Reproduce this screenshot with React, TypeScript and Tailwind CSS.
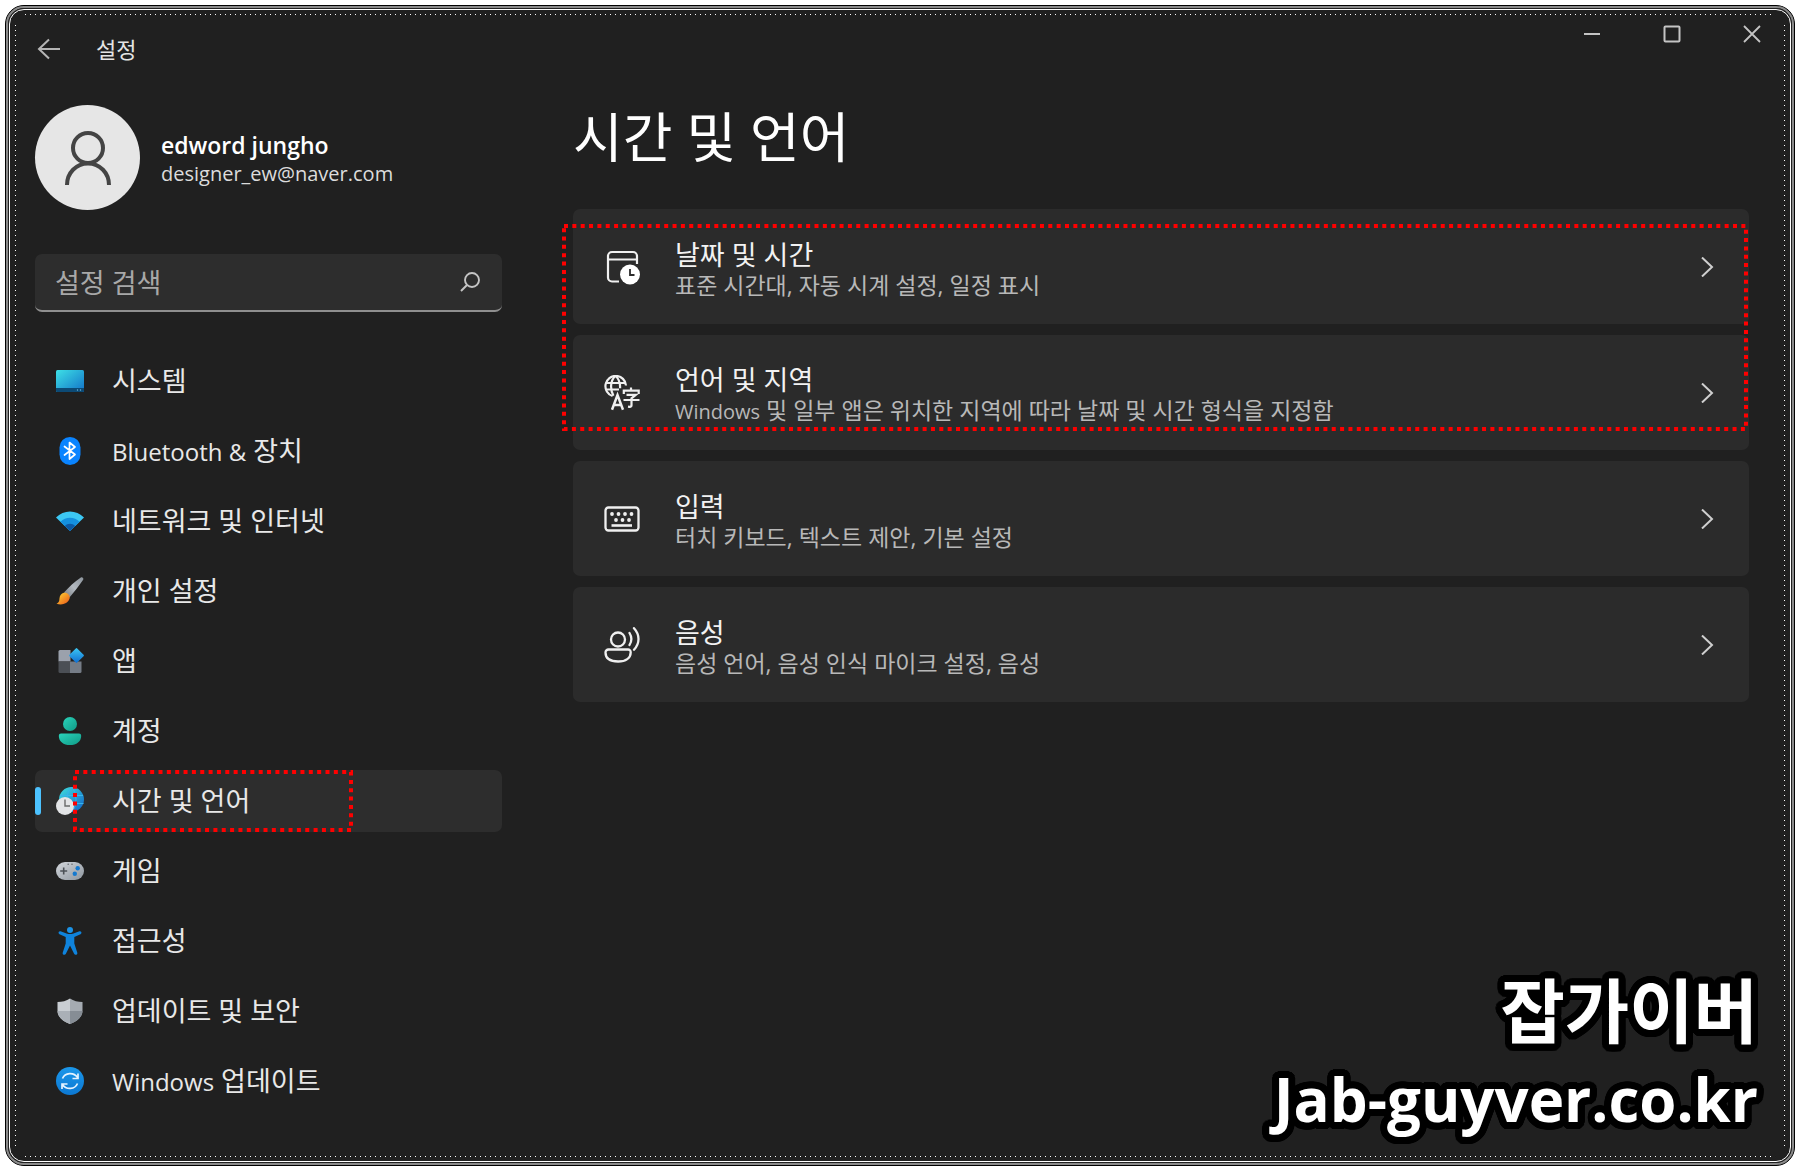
import React from 'react'

type NavItem = { label: React.ReactNode; icon: React.ReactNode; active?: boolean }
type CardItem = { title: string; desc: React.ReactNode; icon: React.ReactNode }

const SystemIcon = () => (
  <svg viewBox="0 0 28 28" className="h-7 w-7">
    <defs>
      <linearGradient id="sys" x1="0" y1="0" x2="1" y2="1">
        <stop offset="0" stopColor="#3de0e6" />
        <stop offset="1" stopColor="#1272c8" />
      </linearGradient>
    </defs>
    <rect x="0" y="3" width="28" height="22" rx="1.500" fill="url(#sys)" />
    <path d="M0 21h28v2.500a1.500 1.500 0 0 1-1.500 1.500h-25A1.500 1.500 0 0 1 0 23.500z" fill="#0c4a75" />
    <circle cx="21.500" cy="23" r="0.700" fill="#6fb8dc" />
    <circle cx="24.500" cy="23" r="0.700" fill="#6fb8dc" />
  </svg>
)

const BluetoothIcon = () => (
  <svg viewBox="0 0 28 28" className="h-7 w-7">
    <rect x="3.500" y="0" width="21" height="28" rx="10.500" fill="#0a84ff" />
    <path d="M8.500 9.500l10.500 8-5.500 4.500V5.500l5.500 4.500-10.500 8" fill="none" stroke="#fff" strokeWidth="1.700" strokeLinejoin="round" strokeLinecap="round" />
  </svg>
)

const NetworkIcon = () => (
  <svg viewBox="0 0 28 28" className="h-7 w-7">
    <path d="M14 24L0 10.500C7.500 2.500 20.500 2.500 28 10.500z" fill="#3cc8f4" />
    <path d="M14 24L4.500 14.800c5-5.500 14-5.500 19 0z" fill="#1490df" />
    <path d="M14 24L8.800 19c2.800-3 7.600-3 10.400 0z" fill="#0c59a4" />
  </svg>
)

const BrushIcon = () => (
  <svg viewBox="0 0 28 28" className="h-7 w-7">
    <defs>
      <linearGradient id="brush" x1="0" y1="0" x2="1" y2="1">
        <stop offset="0.200" stopColor="#fbc02d" />
        <stop offset="1" stopColor="#e8541a" />
      </linearGradient>
      <linearGradient id="handle" x1="1" y1="0" x2="0" y2="1">
        <stop offset="0" stopColor="#8b939b" />
        <stop offset="0.500" stopColor="#b4bac1" />
        <stop offset="1" stopColor="#73797f" />
      </linearGradient>
    </defs>
    <path d="M24.500.800c1.600-1.400 3.700.600 2.500 2.300C23 9 18.500 14.800 13.500 20.500L8 15.500C13 10 18.500 5 24.500.800z" fill="url(#handle)" />
    <path d="M7.800 15.800c3.800-.700 7 2.800 5.600 6.300C11.700 27 5.500 28.600.500 26.700c3-1.300 2.700-3 3-5.400.300-2.800 1.700-5 4.300-5.500z" fill="url(#brush)" />
  </svg>
)

const AppsIcon = () => (
  <svg viewBox="0 0 28 28" className="h-7 w-7">
    <defs>
      <linearGradient id="apps" x1="0" y1="0" x2="1" y2="1">
        <stop offset="0" stopColor="#3cc8f4" />
        <stop offset="1" stopColor="#0f6cd0" />
      </linearGradient>
    </defs>
    <path d="M4 3h10.500v11.500H2.500V4.500A1.500 1.500 0 0 1 4 3z" fill="#9ba1ac" />
    <path d="M2.500 14.500h11.500V26H4a1.500 1.500 0 0 1-1.500-1.500z" fill="#4b4f55" />
    <path d="M14 14.500h11.500v10A1.500 1.500 0 0 1 24 26H14z" fill="#757c86" />
    <rect x="15" y="3" width="11" height="11" rx="1" transform="rotate(45 20.500 8.500)" fill="url(#apps)" />
  </svg>
)

const AccountIcon = () => (
  <svg viewBox="0 0 28 28" className="h-7 w-7">
    <defs>
      <linearGradient id="acc" x1="0" y1="0" x2="1" y2="1">
        <stop offset="0" stopColor="#2ad4bb" />
        <stop offset="1" stopColor="#109a86" />
      </linearGradient>
    </defs>
    <circle cx="14" cy="7" r="7" fill="url(#acc)" />
    <path d="M5 16.500h18a2.200 2.200 0 0 1 2.200 2.200C25.200 24.500 20.500 28 14 28S2.800 24.500 2.800 18.700A2.200 2.200 0 0 1 5 16.500z" fill="url(#acc)" />
  </svg>
)

const TimeIcon = () => (
  <svg viewBox="0 0 28 28" className="h-7 w-7">
    <defs>
      <linearGradient id="globe" x1="0" y1="0" x2="1" y2="1">
        <stop offset="0" stopColor="#3fe0de" />
        <stop offset="1" stopColor="#0f62c8" />
      </linearGradient>
    </defs>
    <circle cx="15.500" cy="12.500" r="12.500" fill="url(#globe)" />
    <path d="M4 8.500h23M5 16.500h22.500M15.500 0c-6 6-6 19 0 25M15.500 0c6 6 6 19 0 25" fill="none" stroke="#38b5ea" strokeWidth="1" />
    <circle cx="9" cy="19" r="9" fill="#e3e4e6" />
    <path d="M9 12.500V19h5" fill="none" stroke="#6b6b6b" strokeWidth="1.400" />
  </svg>
)

const GameIcon = () => (
  <svg viewBox="0 0 28 28" className="h-7 w-7">
    <defs>
      <linearGradient id="pad" x1="0" y1="0" x2="1" y2="1">
        <stop offset="0" stopColor="#d3d7dc" />
        <stop offset="1" stopColor="#8e969f" />
      </linearGradient>
    </defs>
    <rect x="0" y="5" width="28" height="18" rx="9" fill="url(#pad)" />
    <path d="M7.700 10.500v7M4.200 14h7" stroke="#4c5157" strokeWidth="1.600" />
    <circle cx="21.700" cy="11.300" r="2.200" fill="#1579cf" />
    <circle cx="18.800" cy="16.800" r="2.200" fill="#1579cf" />
    <circle cx="12.200" cy="7.200" r="0.800" fill="#666b71" />
    <circle cx="16" cy="7.200" r="0.800" fill="#666b71" />
  </svg>
)

const AccessIcon = () => (
  <svg viewBox="0 0 28 28" className="h-7 w-7">
    <circle cx="14" cy="3" r="3" fill="#1b93e6" />
    <path d="M4.500 4.300l6 2.200c2.300.800 4.700.800 7 0l6-2.200c2-.600 2.700 2.200 1 3L18.300 10v6.500l3 9.300c.500 2-2.400 2.900-3.200 1L14 18.500l-4.100 8.300c-.800 1.900-3.700 1-3.200-1l3-9.300V10L3.500 7.300c-1.700-.800-1-3.600 1-3z" fill="#0f83dc" />
  </svg>
)

const ShieldIcon = () => (
  <svg viewBox="0 0 28 28" className="h-7 w-7">
    <path d="M14 1.500C10.500 4 6 5 1.500 5v8.500C1.500 20 7 24.500 14 27z" fill="#c9ced3" />
    <path d="M14 1.500C17.500 4 22 5 26.500 5v8.500C26.500 20 21 24.500 14 27z" fill="#a5abb2" />
    <path d="M1.500 14H14v13C7 24.500 1.500 20 1.500 14z" fill="#aab0b7" />
    <path d="M26.500 14H14v13c7-2.500 12.500-7 12.500-13z" fill="#868d95" />
  </svg>
)

const UpdateIcon = () => (
  <svg viewBox="0 0 28 28" className="h-7 w-7">
    <defs>
      <linearGradient id="upd" x1="0" y1="0" x2="0" y2="1">
        <stop offset="0" stopColor="#1b97ea" />
        <stop offset="1" stopColor="#0c78d2" />
      </linearGradient>
    </defs>
    <circle cx="14" cy="14" r="14" fill="url(#upd)" />
    <path d="M6.500 11.500c2.500-6 11-6.800 15.200-1M22 6.500v5h-5.500M21.500 16.500c-2.500 6-11 6.800-15.200 1M6 22v-5h5.500" fill="none" stroke="#e4f3ff" strokeWidth="1.700" />
  </svg>
)

const DateIcon = () => (
  <svg viewBox="0 0 36 36" className="h-9 w-9" fill="none" stroke="#f0f0f0" strokeWidth="2.200">
    <path d="M33 15V7a4 4 0 0 0-4-4H8a4 4 0 0 0-4 4v21.500a4 4 0 0 0 4 4h7M4 10.500h29" />
    <circle cx="26" cy="25.500" r="10" fill="#fff" stroke="none" />
    <path d="M26 20v6h4.500" stroke="#2b2b2b" strokeWidth="1.800" />
  </svg>
)

const LanguageIcon = () => (
  <svg viewBox="0 0 36 36" className="h-9 w-9" fill="none" stroke="#f0f0f0" strokeWidth="2.200">
    <path d="M22 10.500A10.300 10.300 0 1 0 8.500 21" />
    <path d="M1.500 8h20M1.500 14.500h13.500M11.500.800c-5.500 5-5.500 14-2 20M11.500.800c3.800 3.500 4.800 7.500 4.600 12.500" />
    <path d="M8 34.800L13.500 20 19 34.800M10 30h7" strokeWidth="2.500" />
    <path d="M27 12.500v3M19.800 19v-3.300h14.900V19M22.500 19.800h9.300L27.500 23.300V30.500c0 1.200-1.500 1.500-3.500 1.200M19.500 25h16" strokeWidth="2.200" />
  </svg>
)

const KeyboardIcon = () => (
  <svg viewBox="0 0 36 36" className="h-9 w-9" fill="none" stroke="#f0f0f0" strokeWidth="2.300">
    <rect x="1.500" y="6.500" width="33" height="23" rx="3" />
    <path d="M7.500 24.500h20.500" strokeWidth="2.600" />
    <g fill="#f0f0f0" stroke="none">
      <circle cx="8" cy="13" r="1.900" />
      <circle cx="14.500" cy="13" r="1.900" />
      <circle cx="21" cy="13" r="1.900" />
      <circle cx="27.500" cy="13" r="1.900" />
      <circle cx="12" cy="19" r="1.900" />
      <circle cx="18.500" cy="19" r="1.900" />
      <circle cx="25" cy="19" r="1.900" />
    </g>
  </svg>
)

const SpeechIcon = () => (
  <svg viewBox="0 0 36 36" className="h-9 w-9" fill="none" stroke="#f0f0f0" strokeWidth="2.300">
    <circle cx="14" cy="12.500" r="7" />
    <path d="M4.500 22.500h19.500a2.700 2.700 0 0 1 2.700 2.700c0 6-5 9.300-12.600 9.300S1.500 31.500 1.500 25.500a3 3 0 0 1 3-3z" />
    <path d="M25.500 6c2.500 4 2.500 8 0 12M30 1.200c6 6.500 6 15 0 21.500" strokeLinecap="round" />
  </svg>
)

const navItems: NavItem[] = [
  { label: '시스템', icon: <SystemIcon /> },
  { label: <><span className="text-2xl">Bluetooth &amp;</span> 장치</>, icon: <BluetoothIcon /> },
  { label: '네트워크 및 인터넷', icon: <NetworkIcon /> },
  { label: '개인 설정', icon: <BrushIcon /> },
  { label: '앱', icon: <AppsIcon /> },
  { label: '계정', icon: <AccountIcon /> },
  { label: '시간 및 언어', icon: <TimeIcon />, active: true },
  { label: '게임', icon: <GameIcon /> },
  { label: '접근성', icon: <AccessIcon /> },
  { label: '업데이트 및 보안', icon: <ShieldIcon /> },
  { label: <><span className="text-2xl">Windows</span> 업데이트</>, icon: <UpdateIcon /> },
]

const cards: CardItem[] = [
  { title: '날짜 및 시간', desc: '표준 시간대, 자동 시계 설정, 일정 표시', icon: <DateIcon /> },
  { title: '언어 및 지역', desc: <><span className="text-xl">Windows</span> 및 일부 앱은 위치한 지역에 따라 날짜 및 시간 형식을 지정함</>, icon: <LanguageIcon /> },
  { title: '입력', desc: '터치 키보드, 텍스트 제안, 기본 설정', icon: <KeyboardIcon /> },
  { title: '음성', desc: '음성 언어, 음성 인식 마이크 설정, 음성', icon: <SpeechIcon /> },
]

// ring of hard shadows, gives the logo text a round black outline
const outline = Array.from({ length: 32 }, (_, i) => {
  const a = (i / 32) * Math.PI * 2
  return `${(Math.cos(a) * 7).toFixed(1)}px ${(Math.sin(a) * 7).toFixed(1)}px 0 #000`
}).join(', ')

// dotted red outline drawn over the content it points at
function Marker({ className }: { className: string }) {
  return (
    <svg className={`pointer-events-none absolute overflow-visible ${className}`} aria-hidden="true">
      <rect width="100%" height="100%" fill="none" stroke="#ff0000" strokeWidth="4" strokeDasharray="4 4.350" />
    </svg>
  )
}

// fine white dots just inside the window border
function DottedEdge() {
  return (
    <>
      <svg className="pointer-events-none absolute top-1 right-[15px] left-[15px] h-px w-[calc(100%-30px)]" aria-hidden="true">
        <line x1="0" y1="0.500" x2="100%" y2="0.500" stroke="#fff" strokeDasharray="1 4" />
      </svg>
      <svg className="pointer-events-none absolute right-[15px] bottom-1 left-[15px] h-px w-[calc(100%-30px)]" aria-hidden="true">
        <line x1="0" y1="0.500" x2="100%" y2="0.500" stroke="#fff" strokeDasharray="1 4" />
      </svg>
      <svg className="pointer-events-none absolute top-[15px] left-[5px] h-[calc(100%-30px)] w-px" aria-hidden="true">
        <line x1="0.500" y1="0" x2="0.500" y2="100%" stroke="#fff" strokeDasharray="1 4" />
      </svg>
      <svg className="pointer-events-none absolute top-[15px] right-[5px] h-[calc(100%-30px)] w-px" aria-hidden="true">
        <line x1="0.500" y1="0" x2="0.500" y2="100%" stroke="#fff" strokeDasharray="1 4" />
      </svg>
    </>
  )
}

function TitleBar() {
  return (
    <header className="flex items-start justify-between pl-[18px]">
      <div className="flex items-center gap-[31px] pt-[18px]">
        <button aria-label="뒤로" className="grid h-8 w-8 place-items-center">
          <svg viewBox="0 0 24 24" className="h-6 w-6" fill="none" stroke="#b5b5b5" strokeWidth="2">
            <path d="M23 12H2M12 2.500L2 12l10 9.500" />
          </svg>
        </button>
        <span className="text-[22px] leading-8 text-[#e4e4e4]">설정</span>
      </div>
      <div className="flex items-center gap-[44px] pt-px pr-[15px] text-[#c4c4c4]">
        <button aria-label="최소화" className="grid h-9 w-9 place-items-center">
          <svg viewBox="0 0 18 18" className="h-[18px] w-[18px]" stroke="currentColor" strokeWidth="2">
            <path d="M1 9h16" />
          </svg>
        </button>
        <button aria-label="최대화" className="grid h-9 w-9 place-items-center">
          <svg viewBox="0 0 18 18" className="h-[18px] w-[18px]" fill="none" stroke="currentColor" strokeWidth="2">
            <rect x="1.500" y="1.500" width="15" height="15" rx="1" />
          </svg>
        </button>
        <button aria-label="닫기" className="grid h-9 w-9 place-items-center">
          <svg viewBox="0 0 18 18" className="h-[18px] w-[18px]" stroke="currentColor" strokeWidth="1.800">
            <path d="M1 1l16 16M17 1L1 17" />
          </svg>
        </button>
      </div>
    </header>
  )
}

function Sidebar() {
  return (
    <aside className="w-[467px] shrink-0">
      <div className="flex items-center gap-[21px]">
        <div className="grid h-[105px] w-[105px] shrink-0 place-items-center rounded-full bg-[#e6e6e6]">
          <svg viewBox="0 0 48 54" className="h-[54px] w-12" fill="none" stroke="#444" strokeWidth="4">
            <circle cx="24" cy="17" r="15" />
            <path d="M3 54c0-12 9-21.500 21-21.500S45 42 45 54" />
          </svg>
        </div>
        <div className="pt-[2px]">
          <div className="text-[23px] leading-[30px] font-semibold text-white">edword jungho</div>
          <div className="text-xl leading-7 text-[#dcdcdc]">designer_ew@naver.com</div>
        </div>
      </div>

      <div className="mt-[44px] flex h-[58px] items-center rounded-[7px] border-b-2 border-[#8f8f8f] bg-[#2d2d2d] pr-[22px] pl-5">
        <input type="text" aria-label="설정 검색" placeholder="설정 검색" className="h-full min-w-0 flex-1 bg-transparent text-[27px] text-white outline-none placeholder:text-[#a8a8a8]" />
        <svg viewBox="0 0 20 20" className="h-5 w-5" fill="none" stroke="#c4c4c4" strokeWidth="1.900">
          <circle cx="12" cy="8" r="7" />
          <path d="M7 13l-6 6" />
        </svg>
      </div>

      <nav className="mt-[38px] flex flex-col gap-2">
        {navItems.map((item, i) => (
          <a key={i} href="#" className={`relative flex h-[62px] items-center gap-7 rounded-[7px] pl-[21px] ${item.active ? 'bg-[#2d2d2d]' : ''}`}>
            {item.active && <span className="absolute left-0 h-7 w-[6px] rounded-full bg-[#4cc2ff]" />}
            {item.icon}
            <span className="text-[27px] leading-8 text-[#e8e8e8]">{item.label}</span>
            {item.active && <Marker className="top-[2px] left-[40px] h-[58px] w-[276px]" />}
          </a>
        ))}
      </nav>
    </aside>
  )
}

function Card({ title, desc, icon }: CardItem) {
  return (
    <a href="#" className="flex h-[115px] items-center rounded-[7px] bg-[#2b2b2b] pr-[34px] pl-[31px]">
      {icon}
      <div className="ml-[35px] flex-1 pt-[6px]">
        <div className="text-[27px] leading-[30px] text-[#f2f2f2]">{title}</div>
        <div className="text-[23px] leading-[30px] text-[#b8b8b8]">{desc}</div>
      </div>
      <svg viewBox="0 0 16 20" className="h-5 w-4" fill="none" stroke="#cfcfcf" strokeWidth="2">
        <path d="M3 0.500l10 9.500-10 9.500" />
      </svg>
    </a>
  )
}

export default function App() {
  return (
    <div className="flex min-h-screen bg-white p-[5px] font-['Open_Sans','Noto_Sans_CJK_KR',sans-serif]">
      <div className="flex flex-1 rounded-[19px] border border-black bg-[#202020]">
        <div className="flex flex-1 rounded-[18px] border-2 border-[#8a8a8a]">
          <div className="flex flex-1 rounded-[16px] border border-[#202020]">
            <div className="relative flex flex-1 flex-col rounded-[15px] border border-white p-[5px]">
              <DottedEdge />

              <TitleBar />
              <div className="mt-[40px] flex flex-1 gap-[71px] pr-[36px] pl-5">
                <Sidebar />
                <main className="min-w-0 flex-1">
                  <h1 className="text-[54px] leading-[64px] text-white">시간 및 언어</h1>
                  <div className="relative mt-10 flex flex-col gap-[11px]">
                    {cards.map((card) => (
                      <Card key={card.title} {...card} />
                    ))}
                    <Marker className="top-[17px] -left-[9px] h-[203px] w-[calc(100%+6px)]" />
                  </div>
                </main>
              </div>

              <div className="pointer-events-none absolute right-[32px] bottom-[18px] text-right font-bold text-white" style={{ textShadow: outline }}>
                <div className="text-[70px] leading-[88px]">잡가이버</div>
                <div className="text-[60px] leading-[88px]">Jab-guyver.co.kr</div>
              </div>
            </div>
          </div>
        </div>
      </div>
    </div>
  )
}
